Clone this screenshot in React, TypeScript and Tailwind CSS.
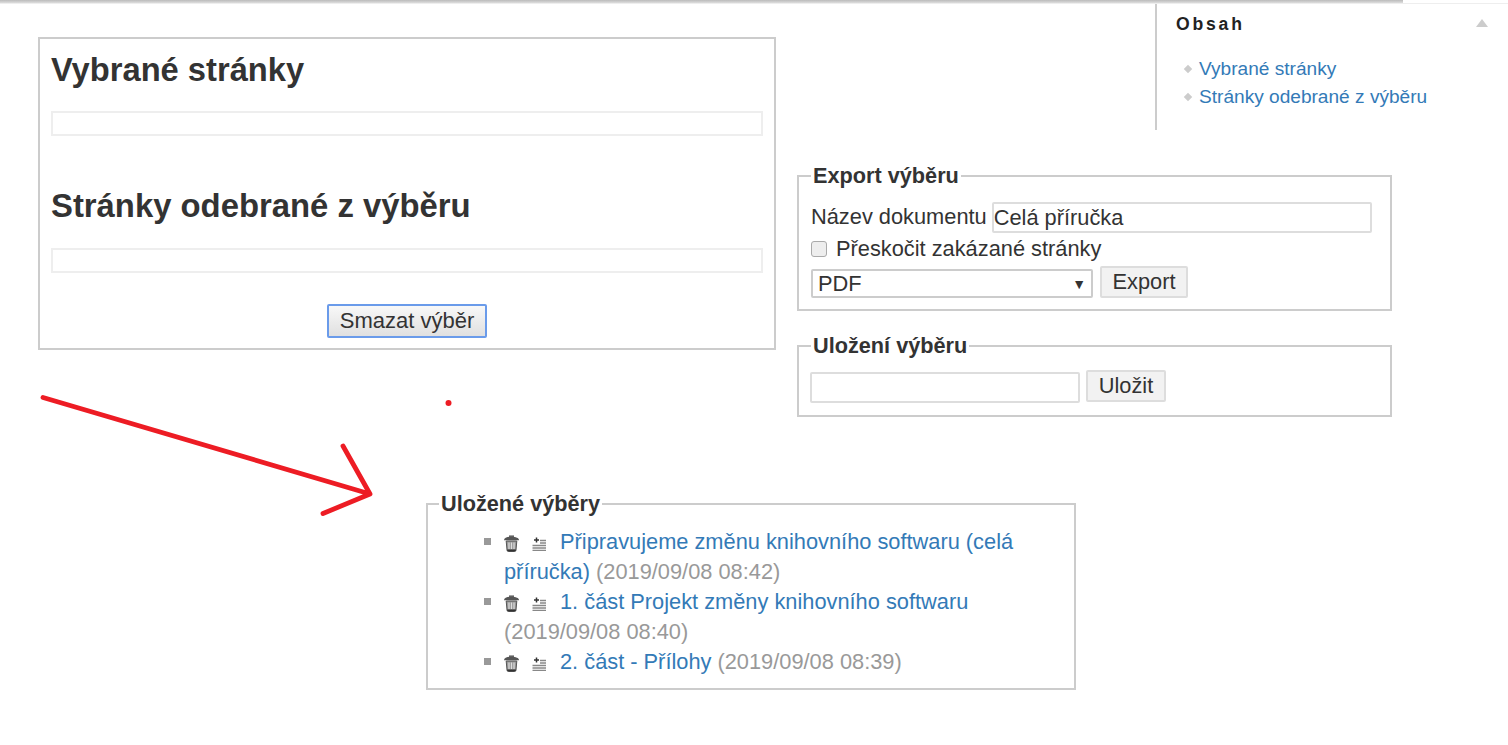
const saved = [
  { title: "Připravujeme změnu knihovního softwaru (celá příručka)", date: "(2019/09/08 08:42)" },
  { title: "1. část Projekt změny knihovního softwaru", date: "(2019/09/08 08:40)" },
  { title: "2. část - Přílohy", date: "(2019/09/08 08:39)" },
];

function TrashIcon() {
  return (
    <svg width="17" height="17" viewBox="0 0 17 17" className="-ml-[1px] mr-[12px] inline-block align-[-3px]">
      <path d="M6 1.2h5" stroke="#666" strokeWidth="1.6" fill="none" />
      <path d="M1 5.2c0-2.2 3.2-3.4 7.5-3.4s7.500 1.200 7.500 3.400z" fill="#555" />
      <path d="M3.200 6h10.600l-.8 9c-.1.900-.8 1.500-1.600 1.500H5.600c-.8 0-1.500-.6-1.600-1.500z" fill="#999" stroke="#555" strokeWidth="1" />
      <path d="M6 7.500v6.500M8.500 7.500v6.500M11 7.500v6.500" stroke="#ddd" strokeWidth="1.200" fill="none" />
      <path d="M4.200 15.400h8.600" stroke="#333" strokeWidth="1.800" fill="none" />
    </svg>
  );
}

function AddIcon() {
  return (
    <svg width="14" height="14" viewBox="0 0 14 14" className="inline-block align-[-2px]">
      <path d="M4.500 0.500v5M2 3h5" stroke="#333" strokeWidth="1.500" fill="none" />
      <path d="M8 3.500h6M8 6h6M0.500 8.500h13.500M0.500 11h13.500M0.500 13.400h13.500" stroke="#888" strokeWidth="1.300" fill="none" />
    </svg>
  );
}

export default function App() {
  return (
    <div className="relative h-[745px] w-[1508px] overflow-hidden bg-white font-['Liberation_Sans',Arial,sans-serif] text-[21.8px] leading-[30px] text-[#333]">
      {/* top scrollbar strip */}
      <div className="flex h-[4px] border-b border-[#eee]">
        <div className="h-[3px] w-[1403px] bg-gradient-to-b from-[#bbb] to-[#ddd]" />
      </div>

      <div className="flex items-start">
        {/* Selection box */}
        <div className="ml-[38px] mt-[33px] h-[313px] w-[738px] border-2 border-[#ccc] px-[11px]">
          <h2 className="mt-[11px] text-[32.7px] font-bold leading-[40px]">Vybrané stránky</h2>
          <div className="mt-[21px] h-[25px] border-2 border-[#eee]" />
          <h2 className="mt-[50px] text-[32.85px] font-bold leading-[40px]">Stránky odebrané z výběru</h2>
          <div className="mt-[22px] h-[25px] border-2 border-[#eee]" />
          <div className="mt-[31px] flex justify-center">
            <button className="h-[34px] w-[160px] rounded-[2px] border-2 border-[#6a9bea] bg-gradient-to-b from-[#f8f8f8] to-[#e0e0e0] text-[22px] leading-none text-[#333]">
              Smazat výběr
            </button>
          </div>
        </div>

        <div className="ml-[21px] w-[711px]">
          {/* Table of contents */}
          <div className="ml-[358px] flex h-[126px] w-[351px] border-l-2 border-[#ccc]">
            <div className="flex-1 pl-[19px]">
              <div className="mt-[5px] flex items-center justify-between pr-[18px]">
                <span className="text-[17.6px] font-bold leading-[30px] tracking-[2.8px] text-[#222]">Obsah</span>
                <span className="mt-[-2px] h-0 w-0 border-x-[6px] border-b-[8px] border-x-transparent border-b-[#ccc]" />
              </div>
              <ul className="mt-[16px] text-[19.1px] leading-[28px] text-[#337ab7]">
                <li className="flex items-center">
                  <span className="ml-[9px] mr-[8px] h-[6px] w-[6px] rotate-45 bg-[#ccc]" />
                  Vybrané stránky
                </li>
                <li className="flex items-center">
                  <span className="ml-[9px] mr-[8px] h-[6px] w-[6px] rotate-45 bg-[#ccc]" />
                  Stránky odebrané z výběru
                </li>
              </ul>
            </div>
          </div>

          {/* Export */}
          <fieldset className="mt-[34px] h-[147px] w-[595px] border-2 border-[#ccc] px-[12px]">
            <legend className="px-[2px] text-[21.7px] font-bold leading-[24px]">Export výběru</legend>
            <div className="mt-[12px] flex items-center gap-[5px]">
              <label>Název dokumentu</label>
              <input
                readOnly
                value="Celá příručka"
                className="mt-[2px] h-[31px] w-[380px] rounded-[2px] border-2 border-[#ddd] px-0 text-[21.8px] outline-none"
              />
            </div>
            <label className="flex h-[32px] items-center gap-[9px]">
              <span className="h-[16px] w-[16px] rounded-[3px] border border-[#aaa] bg-[#eee]" />
              Přeskočit zakázané stránky
            </label>
            <div className="flex items-start gap-[7px]">
              <div className="mt-[4px] flex h-[29px] w-[282px] items-center justify-between rounded-[2px] border-2 border-[#ccc] pl-[5px] pr-[5px]">
                PDF
                <span className="text-[14px] leading-none">▼</span>
              </div>
              <button className="mt-[1px] h-[32px] w-[88px] rounded-[2px] border-2 border-[#ddd] bg-[#f2f2f2] text-[21.8px] leading-none">Export</button>
            </div>
          </fieldset>

          {/* Save */}
          <fieldset className="mt-[23px] h-[83px] w-[595px] border-2 border-[#ccc] px-[12px]">
            <legend className="px-[2px] text-[21.7px] font-bold leading-[24px]">Uložení výběru</legend>
            <div className="-ml-[1px] mt-[12px] flex items-start gap-[6px]">
              <input readOnly className="mt-[2px] h-[31px] w-[270px] rounded-[2px] border-2 border-[#ddd] outline-none" />
              <button className="h-[32px] w-[80px] rounded-[2px] border-2 border-[#ddd] bg-[#f2f2f2] text-[21.8px] leading-none">Uložit</button>
            </div>
          </fieldset>
        </div>
      </div>

      {/* Saved selections */}
      <fieldset className="ml-[426px] mt-[75px] h-[198px] w-[650px] border-2 border-[#ccc]">
        <legend className="ml-[11px] px-[2px] text-[21.7px] font-bold leading-[24px]">Uložené výběry</legend>
        <ul className="ml-[76px] mr-[40px] mt-[11px] list-none">
          {saved.map((s) => (
            <li key={s.date} className="relative">
              <span className="absolute left-[-20px] top-[11px] h-[7px] w-[7px] bg-[#999]" />
              <TrashIcon />
              <AddIcon />
              <span className="ml-[14px] text-[#337ab7]">{s.title}</span>{" "}
              <span className="text-[#999]">{s.date}</span>
            </li>
          ))}
        </ul>
      </fieldset>

      {/* Red annotation */}
      <svg className="pointer-events-none absolute left-0 top-0" width="1508" height="745" fill="none">
        <path d="M43 397.500L370 494M343 446L370 494L323 513.500" stroke="#ed1c24" strokeWidth="4.800" strokeLinecap="round" strokeLinejoin="round" />
        <circle cx="448.500" cy="403" r="3" fill="#ed1c24" />
      </svg>
    </div>
  );
}
